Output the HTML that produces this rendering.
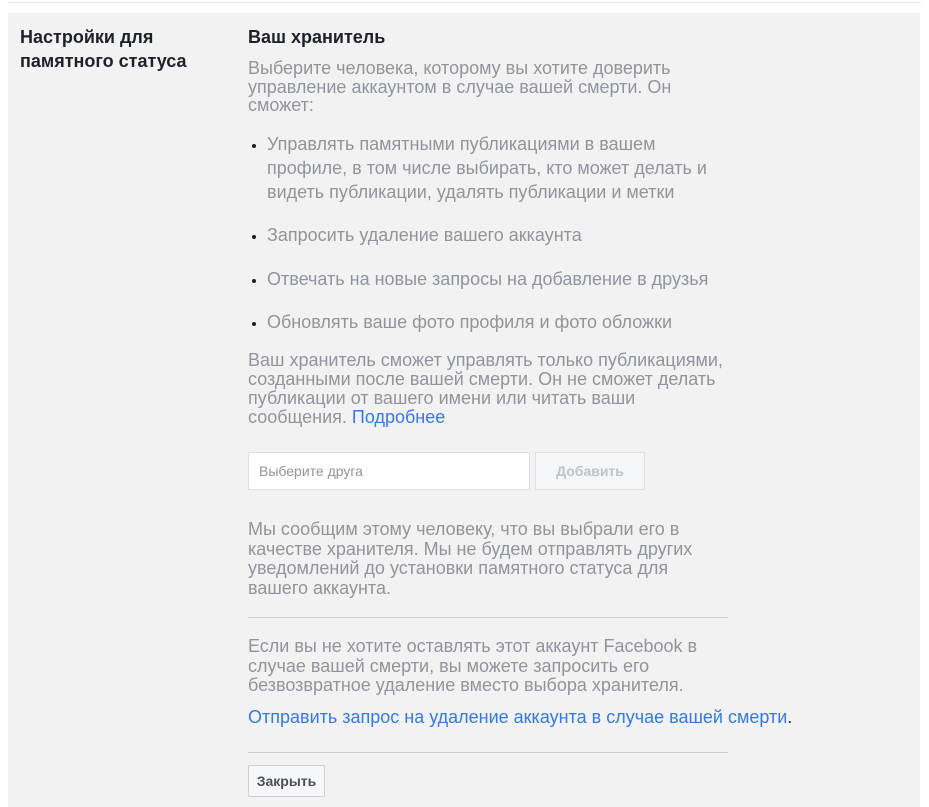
<!DOCTYPE html>
<html><head><meta charset="utf-8"><style>
body{margin:0;width:929px;height:807px;background:#fff;font-family:"Liberation Sans",Arial,sans-serif;position:relative;overflow:hidden}
.top{position:absolute;left:8px;right:8px;top:2px;height:1px;background:#e9eaed}
.bg{position:absolute;left:8px;top:13px;width:912px;height:794px;background:#f2f2f2}
.a{position:absolute;white-space:nowrap}
.h{font-weight:bold;font-size:18px;color:#1d2129;line-height:24px}
.g{color:#90949c;font-size:18px;line-height:18.5px}
ul{margin:0;padding:0 0 0 19px;list-style:disc;color:#90949c;font-size:18px;line-height:24px}
ul li::marker{color:#1d2129;font-size:14px}
a{color:#3578e5;text-decoration:none}
.hr{position:absolute;left:248px;width:480px;height:1px;background:#ccd0d5}
</style></head><body>
<div class="top"></div>
<div class="bg"></div>
<div class="a h" style="left:20px;top:25px">Настройки для<br>памятного статуса</div>
<div class="a h" style="left:248px;top:25px">Ваш хранитель</div>
<div class="a g" style="left:248px;top:59px">Выберите человека, которому вы хотите доверить<br>управление аккаунтом в случае вашей смерти. Он<br>сможет:</div>
<ul class="a" style="left:248px;top:132px"><li>Управлять памятными публикациями в вашем<br>профиле, в том числе выбирать, кто может делать и<br>видеть публикации, удалять публикации и метки</li></ul>
<ul class="a" style="left:248px;top:223px"><li>Запросить удаление вашего аккаунта</li></ul>
<ul class="a" style="left:248px;top:267px"><li>Отвечать на новые запросы на добавление в друзья</li></ul>
<ul class="a" style="left:248px;top:310px"><li>Обновлять ваше фото профиля и фото обложки</li></ul>
<div class="a g" style="left:248px;top:351px;line-height:19px">Ваш хранитель сможет управлять только публикациями,<br>созданными после вашей смерти. Он не сможет делать<br>публикации от вашего имени или читать ваши<br>сообщения. <a>Подробнее</a></div>
<div class="a" style="left:248px;top:452px;height:36px;background:#fff;border:1px solid #dddfe2;font-size:14px;color:#90949c;line-height:36px;padding-left:10px;width:270px">Выберите друга</div>
<div class="a" style="left:535px;top:452px;width:108px;height:36px;background:#f5f6f7;border:1px solid #dddfe2;font-size:14px;font-weight:bold;color:#bec3c9;line-height:36px;text-align:center">Добавить</div>
<div class="a g" style="left:248px;top:520px;line-height:19.5px">Мы сообщим этому человеку, что вы выбрали его в<br>качестве хранителя. Мы не будем отправлять других<br>уведомлений до установки памятного статуса для<br>вашего аккаунта.</div>
<div class="hr" style="top:617px"></div>
<div class="a g" style="left:248px;top:637px;line-height:19.5px">Если вы не хотите оставлять этот аккаунт Facebook в<br>случае вашей смерти, вы можете запросить его<br>безвозвратное удаление вместо выбора хранителя.</div>
<div class="a" style="left:248px;top:707px;font-size:18px;color:#3578e5">Отправить запрос на удаление аккаунта в случае вашей смерти<span style="color:#1d2129">.</span></div>
<div class="hr" style="top:752px"></div>
<div class="a" style="left:248px;top:765px;width:75px;height:30px;background:#f6f7f9;border:1px solid #ced0d4;border-radius:2px;font-size:14px;font-weight:bold;color:#4b4f56;line-height:30px;text-align:center">Закрыть</div>
</body></html>
